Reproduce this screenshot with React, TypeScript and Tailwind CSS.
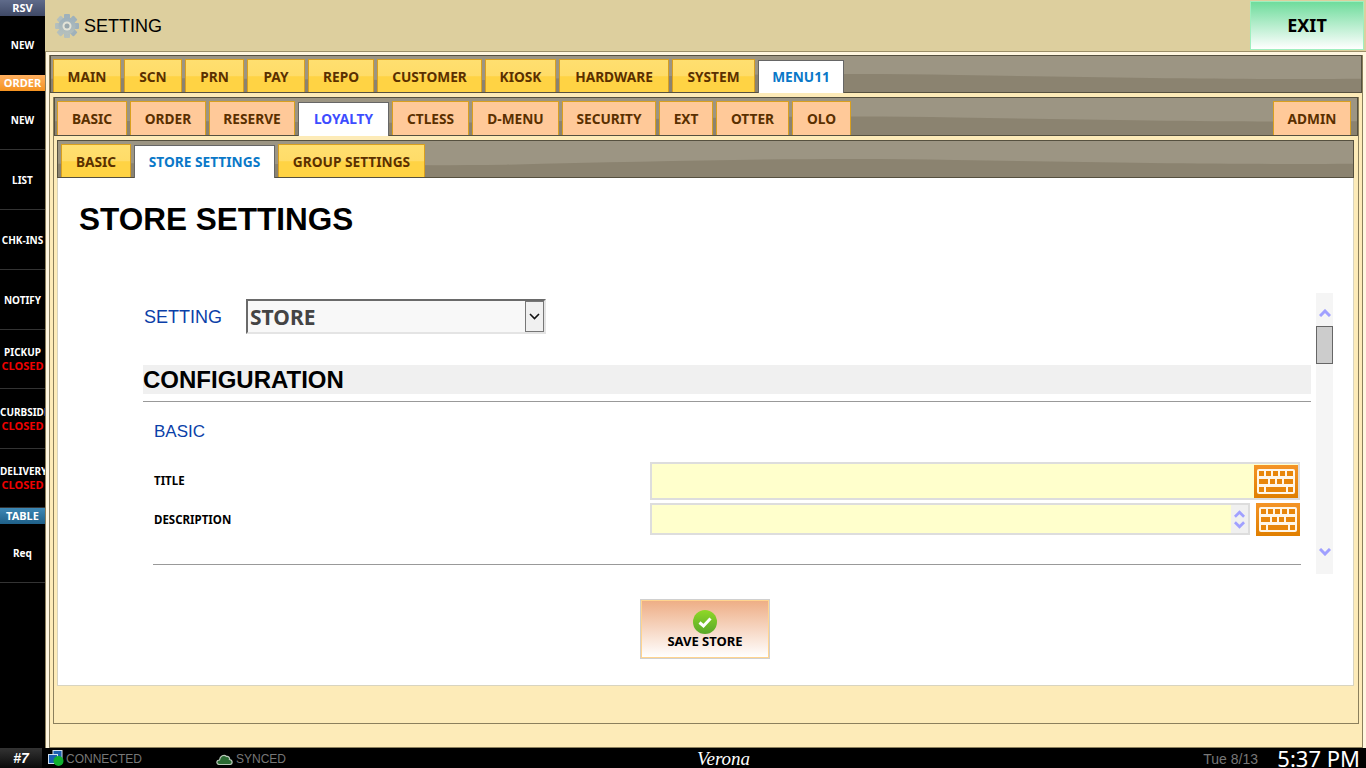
import React from "react";

const tahoma = "font-['Noto_Sans','Open_Sans',sans-serif]";
const arial = "font-['Liberation_Sans',Arial,sans-serif]";

const mainTabs = [
  { label: "MAIN", w: "w-[68px]" },
  { label: "SCN", w: "w-[58px]" },
  { label: "PRN", w: "w-[59px]" },
  { label: "PAY", w: "w-[58px]" },
  { label: "REPO", w: "w-[66px]" },
  { label: "CUSTOMER", w: "w-[105px]" },
  { label: "KIOSK", w: "w-[71px]" },
  { label: "HARDWARE", w: "w-[110px]" },
  { label: "SYSTEM", w: "w-[83px]" },
];

const subTabs = [
  { label: "BASIC", w: "w-[70px]" },
  { label: "ORDER", w: "w-[76px]" },
  { label: "RESERVE", w: "w-[86px]" },
  { label: "LOYALTY", w: "w-[91px]", active: true },
  { label: "CTLESS", w: "w-[77px]" },
  { label: "D-MENU", w: "w-[87px]" },
  { label: "SECURITY", w: "w-[94px]" },
  { label: "EXT", w: "w-[54px]" },
  { label: "OTTER", w: "w-[73px]" },
  { label: "OLO", w: "w-[59px]" },
];

const Waves = () => (
  <svg className="absolute inset-0 w-full h-full" viewBox="0 0 1300 38" preserveAspectRatio="none">
    <rect width="1300" height="38" fill="#9c9583" />
    <path d="M0 24 C200 22 300 27 450 25 C620 21 760 17 900 20 C1050 23 1200 25 1300 24 L1300 38 L0 38 Z" fill="#8b8370" />
  </svg>
);

const YellowTab = ({ label, w }: { label: string; w: string }) => (
  <div className={`${w} h-[33px] pt-[2px] shrink-0 relative flex items-center justify-center border border-b-0 border-[#d9a01f] bg-[linear-gradient(#ffdf70_0%,#ffdc68_50%,#ffd344_52%,#ffd344_100%)] text-[13.7px] font-bold text-[#5a3000] ${tahoma}`}>
    {label}
  </div>
);

const PeachTab = ({ label, w }: { label: string; w: string }) => (
  <div className={`${w} h-[34px] pt-px shrink-0 relative flex items-center justify-center border border-b-0 border-[#d9a01f] bg-[#ffc999] text-[13.7px] font-bold text-[#5a3000] ${tahoma}`}>
    {label}
  </div>
);

const ActiveTab = ({ label, w, h, color }: { label: string; w: string; h: string; color: string }) => (
  <div className={`${w} ${h} shrink-0 relative -mb-px flex items-center justify-center border border-b-0 border-[#666] bg-white text-[13.7px] font-bold ${color} ${tahoma}`}>
    {label}
  </div>
);

const SideRow = ({ h, label, closed }: { h: string; label: string; closed?: boolean }) => (
  <div className={`${h} flex flex-col justify-center border-b border-[#333] overflow-hidden text-center text-[10px] leading-[14px] font-bold text-white whitespace-nowrap ${tahoma}`}>
    <div className="overflow-hidden">{label}</div>
    {closed && <div className="text-[11px] text-[#f00000] overflow-hidden">CLOSED</div>}
  </div>
);

const SideHead = ({ label, bg }: { label: string; bg: string }) => (
  <div className={`h-[16px] flex items-center justify-center text-[11px] font-bold text-white ${bg} ${tahoma}`}>{label}</div>
);

const Gear = () => (
  <svg width="24" height="26" viewBox="0 0 24 26" className="shrink-0">
    <defs>
      <linearGradient id="g" x1="0" y1="0" x2="0" y2="1">
        <stop offset="0" stopColor="#9db0bb" />
        <stop offset="1" stopColor="#b5c0bd" />
      </linearGradient>
    </defs>
    {[0, 45, 90, 135].map((a) => (
      <rect key={a} x="9" y="1" width="6" height="24" rx="1" fill="url(#g)" transform={`rotate(${a} 12 13)`} />
    ))}
    <circle cx="12" cy="13" r="8.5" fill="url(#g)" />
    <circle cx="12" cy="13" r="4.5" fill="#e4e4d8" />
    <circle cx="12" cy="13" r="2.5" fill="#9aa8ad" />
  </svg>
);

const Keyboard = () => (
  <div className="w-[44px] h-[33px] shrink-0 flex items-center justify-center bg-[linear-gradient(#f49426,#e07f00)]">
    <svg width="38" height="25" viewBox="0 0 38 25">
      <rect width="38" height="25" rx="2" fill="#fff6e8" />
      {[2, 9, 16, 23, 30].map((x) => (
        <rect key={x} x={x} y="2" width={x === 30 ? 6 : 5} height="5" fill="#e8860a" />
      ))}
      <rect x="2" y="10" width="9" height="5" fill="#e8860a" />
      <rect x="13" y="10" width="5" height="5" fill="#e8860a" />
      <rect x="20" y="10" width="5" height="5" fill="#e8860a" />
      <rect x="27" y="10" width="9" height="5" fill="#e8860a" />
      <rect x="2" y="18" width="5" height="5" fill="#e8860a" />
      <rect x="9" y="18" width="20" height="5" fill="#e8860a" />
      <rect x="31" y="18" width="5" height="5" fill="#e8860a" />
    </svg>
  </div>
);

const Chev = ({ up, cls }: { up?: boolean; cls: string }) => (
  <svg className={cls} viewBox="0 0 12 8">
    <path d={up ? "M1 7 L6 2 L11 7" : "M1 1 L6 6 L11 1"} fill="none" stroke="#a0a0ff" strokeWidth="3" />
  </svg>
);

const App = () => {
  return (
    <div className="w-[1366px] h-[768px] flex flex-col overflow-hidden bg-black relative">
      <div className="absolute top-0 left-[563px] h-px w-[48px] bg-[#f05050]" />
      <div className="absolute top-0 left-[611px] h-px w-[193px] bg-[#dddddd]" />

      <div className="flex-1 flex min-h-0">
        {/* Left rail */}
        <div className="w-[45px] shrink-0 bg-black flex flex-col">
          <SideHead label="RSV" bg="bg-[linear-gradient(#5f6b8a,#3f4966)]" />
          <div className={`h-[59px] flex items-center justify-center text-[10px] font-bold text-white ${tahoma}`}>NEW</div>
          <SideHead label="ORDER" bg="bg-[linear-gradient(#ffb060,#f59320)]" />
          <SideRow h="h-[59px]" label="NEW" />
          <SideRow h="h-[60px]" label="LIST" />
          <SideRow h="h-[60px]" label="CHK-INS" />
          <SideRow h="h-[60px]" label="NOTIFY" />
          <SideRow h="h-[59px]" label="PICKUP" closed />
          <SideRow h="h-[60px]" label="CURBSIDE" closed />
          <SideRow h="h-[59px]" label="DELIVERY" closed />
          <SideHead label="TABLE" bg="bg-[linear-gradient(#3d88b5,#1f6088)]" />
          <SideRow h="h-[59px]" label="Req" />
        </div>

        <div className="flex-1 flex flex-col min-w-0">
          {/* Header */}
          <div className="h-[52px] shrink-0 flex items-center bg-[#ddcf9e] border-b border-[#9c8f68] relative">
            <div className="ml-[10px] flex items-center gap-[5px]">
              <Gear />
              <span className={`pt-px text-[18px] text-black ${arial}`}>SETTING</span>
            </div>
            <div className={`absolute right-[2px] top-px w-[114px] h-[49px] flex items-center justify-center border border-[#9fefbf] bg-[linear-gradient(#6fdc9c,#ffffff)] text-[18px] font-bold text-black ${tahoma}`}>
              EXIT
            </div>
          </div>

          {/* Nested panels */}
          <div className="flex-1 min-h-0 flex flex-col bg-[#fff6df] pl-[3px] pr-[3px] pt-[3px] border-l border-[#8b7f5c]">
            <div className="flex-1 min-h-0 flex flex-col bg-[#fdebb8] border-x border-b border-[#8b7f5c]">
              <div className="h-[38px] shrink-0 relative flex items-end gap-[3px] pl-[2px] border border-[#55503f]">
                <Waves />
                {mainTabs.map((t) => (
                  <YellowTab key={t.label} {...t} />
                ))}
                <ActiveTab label="MENU11" w="w-[86px]" h="h-[33px]" color="text-[#0a78c8]" />
              </div>

              <div className="flex-1 min-h-0 flex flex-col mx-[3px] mt-[4px] mb-[23px] border-x border-b border-[#8b7f5c]">
                <div className="h-[39px] shrink-0 relative flex items-end gap-[3px] pl-[2px] pr-[6px] border border-[#55503f]">
                  <Waves />
                  {subTabs.map((t) =>
                    t.active ? (
                      <ActiveTab key={t.label} label={t.label} w={t.w} h="h-[34px]" color="text-[#3d4dff]" />
                    ) : (
                      <PeachTab key={t.label} label={t.label} w={t.w} />
                    )
                  )}
                  <div className="flex-1" />
                  <PeachTab label="ADMIN" w="w-[78px]" />
                </div>

                <div className="flex-1 min-h-0 flex flex-col ml-[3px] mr-[4px] mt-[4px] mb-[37px]">
                  <div className="h-[38px] shrink-0 relative flex items-end gap-[3px] pl-[3px] border border-[#55503f]">
                    <Waves />
                    <YellowTab label="BASIC" w="w-[70px]" />
                    <ActiveTab label="STORE SETTINGS" w="w-[141px]" h="h-[33px]" color="text-[#0a78c8]" />
                    <YellowTab label="GROUP SETTINGS" w="w-[147px]" />
                  </div>

                  {/* Content */}
                  <div className="flex-1 min-h-0 bg-white border-x border-b border-[#d8d4c0] flex flex-col">
                    <div className={`ml-[21px] mt-[23px] text-[31.5px] leading-[36px] font-bold text-black ${arial}`}>STORE SETTINGS</div>

                    <div className="mt-[56px] ml-[85px] flex h-[281px]">
                      <div className="w-[1168px] shrink-0 flex flex-col">
                        <div className="flex items-center mt-[6px] h-[35px]">
                          <span className={`w-[103px] pl-[1px] pt-[2px] text-[18px] text-[#0b3fa8] ${arial}`}>SETTING</span>
                          <div className="w-[300px] h-[35px] flex items-center justify-between bg-[#f8f8f8] border-2 border-[#6a6a6a] border-r-[#e4e4e4] border-b-[#e4e4e4]">
                            <span className={`pl-[2px] pt-[2px] text-[21px] font-bold text-[#444] ${tahoma}`}>STORE</span>
                            <div className="w-[19px] h-[31px] flex items-center justify-center bg-[#f0f0f0] border border-[#777]">
                              <svg width="11" height="7" viewBox="0 0 11 7">
                                <path d="M1 1 L5.5 5.5 L10 1" fill="none" stroke="#111" strokeWidth="1.6" />
                              </svg>
                            </div>
                          </div>
                        </div>

                        <div className={`mt-[31px] h-[29px] flex items-center bg-[#f0f0f0] text-[24px] font-bold text-black ${arial}`}>CONFIGURATION</div>
                        <div className="mt-[7px] h-px bg-[#999]" />

                        <div className={`ml-[11px] mt-[20px] text-[17px] leading-[20px] text-[#0b3fa8] ${arial}`}>BASIC</div>

                        <div className="mt-[20px] ml-[11px] flex items-center h-[38px] relative">
                          <span className={`w-[496px] text-[11.5px] font-bold text-black ${tahoma}`}>TITLE</span>
                          <div className="w-[650px] h-[38px] flex items-center justify-end bg-[#ffffcc] border-2 border-[#dddddd]">
                            <Keyboard />
                          </div>
                        </div>

                        <div className="mt-[3px] ml-[11px] flex items-center h-[33px]">
                          <span className={`w-[496px] text-[11.5px] font-bold text-black ${tahoma}`}>DESCRIPTION</span>
                          <div className="w-[600px] h-[32px] self-start flex justify-end bg-[#ffffcc] border-2 border-[#dddddd]">
                            <div className="w-[17px] bg-[#f0f0f0] flex flex-col items-center justify-center gap-[3px]">
                              <Chev up cls="w-[11px] h-[8px]" />
                              <Chev cls="w-[11px] h-[8px]" />
                            </div>
                          </div>
                          <div className="ml-[6px]">
                            <Keyboard />
                          </div>
                        </div>

                        <div className="mt-[28px] ml-[10px] mr-[10px] h-px bg-[#999]" />
                      </div>

                      <div className="ml-[5px] w-[17px] shrink-0 bg-[#f5f5f5] flex flex-col items-center">
                        <Chev up cls="mt-[16px] w-[12px] h-[8px]" />
                        <div className="mt-[9px] w-[17px] h-[38px] bg-[#cccccc] border border-[#666]" />
                        <div className="flex-1" />
                        <Chev cls="mb-[18px] w-[12px] h-[8px]" />
                      </div>
                    </div>

                    <div className="mt-[25px] ml-[582px] w-[130px] h-[60px] flex flex-col items-center border-2 border-[#d0d0d0] outline outline-1 -outline-offset-2 outline-[#ffd48f] bg-[linear-gradient(#eeae86,#ffffff)]">
                      <svg width="24" height="24" viewBox="0 0 24 24" className="mt-[9px] shrink-0">
                        <defs>
                          <linearGradient id="ok" x1="0" y1="0" x2="0" y2="1">
                            <stop offset="0" stopColor="#8fd826" />
                            <stop offset="1" stopColor="#5aa82a" />
                          </linearGradient>
                        </defs>
                        <circle cx="12" cy="12" r="12" fill="url(#ok)" />
                        <path d="M6.5 12.5 L10.5 16 L17.5 8.5" fill="none" stroke="#fff" strokeWidth="3" />
                      </svg>
                      <span className={`-mt-px text-[13px] leading-[16px] font-bold text-black ${tahoma}`}>SAVE STORE</span>
                    </div>
                  </div>
                </div>
              </div>
            </div>
          </div>
        </div>
      </div>

      {/* Status bar */}
      <div className={`h-[20px] shrink-0 flex items-center bg-black relative ${arial}`}>
        <div className="w-[42px] h-[20px] flex items-center justify-center bg-[linear-gradient(#333,#0a0a0a)] text-[14px] italic font-bold text-white">#7</div>
        <svg width="16" height="16" viewBox="0 0 16 16" className="ml-[6px] shrink-0">
          <rect x="5" y="0.5" width="9" height="8" fill="#1b5fb0" stroke="#cfe0f0" />
          <rect x="0.5" y="4.5" width="9" height="9" fill="#1b5fb0" stroke="#cfe0f0" />
          <circle cx="10.5" cy="11" r="5" fill="#10b030" />
        </svg>
        <span className="ml-[2px] pt-[2px] text-[12px] text-[#777]">CONNECTED</span>
        <svg width="17" height="11" viewBox="0 0 17 11" className="ml-[74px] mt-[2px] shrink-0">
          <path d="M3.5 10.5 C0 10.5 0 6 3.5 6 C4 2 8 0 10.5 2.5 C12.5 2 14 4 13.5 5.5 C17 6 17 10.5 13.5 10.5 Z" fill="#2a6a32" stroke="#b8c8b8" strokeWidth="1.2" />
        </svg>
        <span className="ml-[3px] pt-[2px] text-[12px] text-[#777]">SYNCED</span>
        <span className="absolute left-[697px] top-0 text-[19px] leading-[21px] italic text-white font-['Liberation_Serif',serif]">Verona</span>
        <span className="absolute right-[108px] top-[1px] text-[14px] leading-[20px] text-[#777]">Tue 8/13</span>
        <span className={`absolute right-[6px] top-0 text-[22px] leading-[20px] text-white ${tahoma}`}>5:37 PM</span>
      </div>
    </div>
  );
};

export default App;
